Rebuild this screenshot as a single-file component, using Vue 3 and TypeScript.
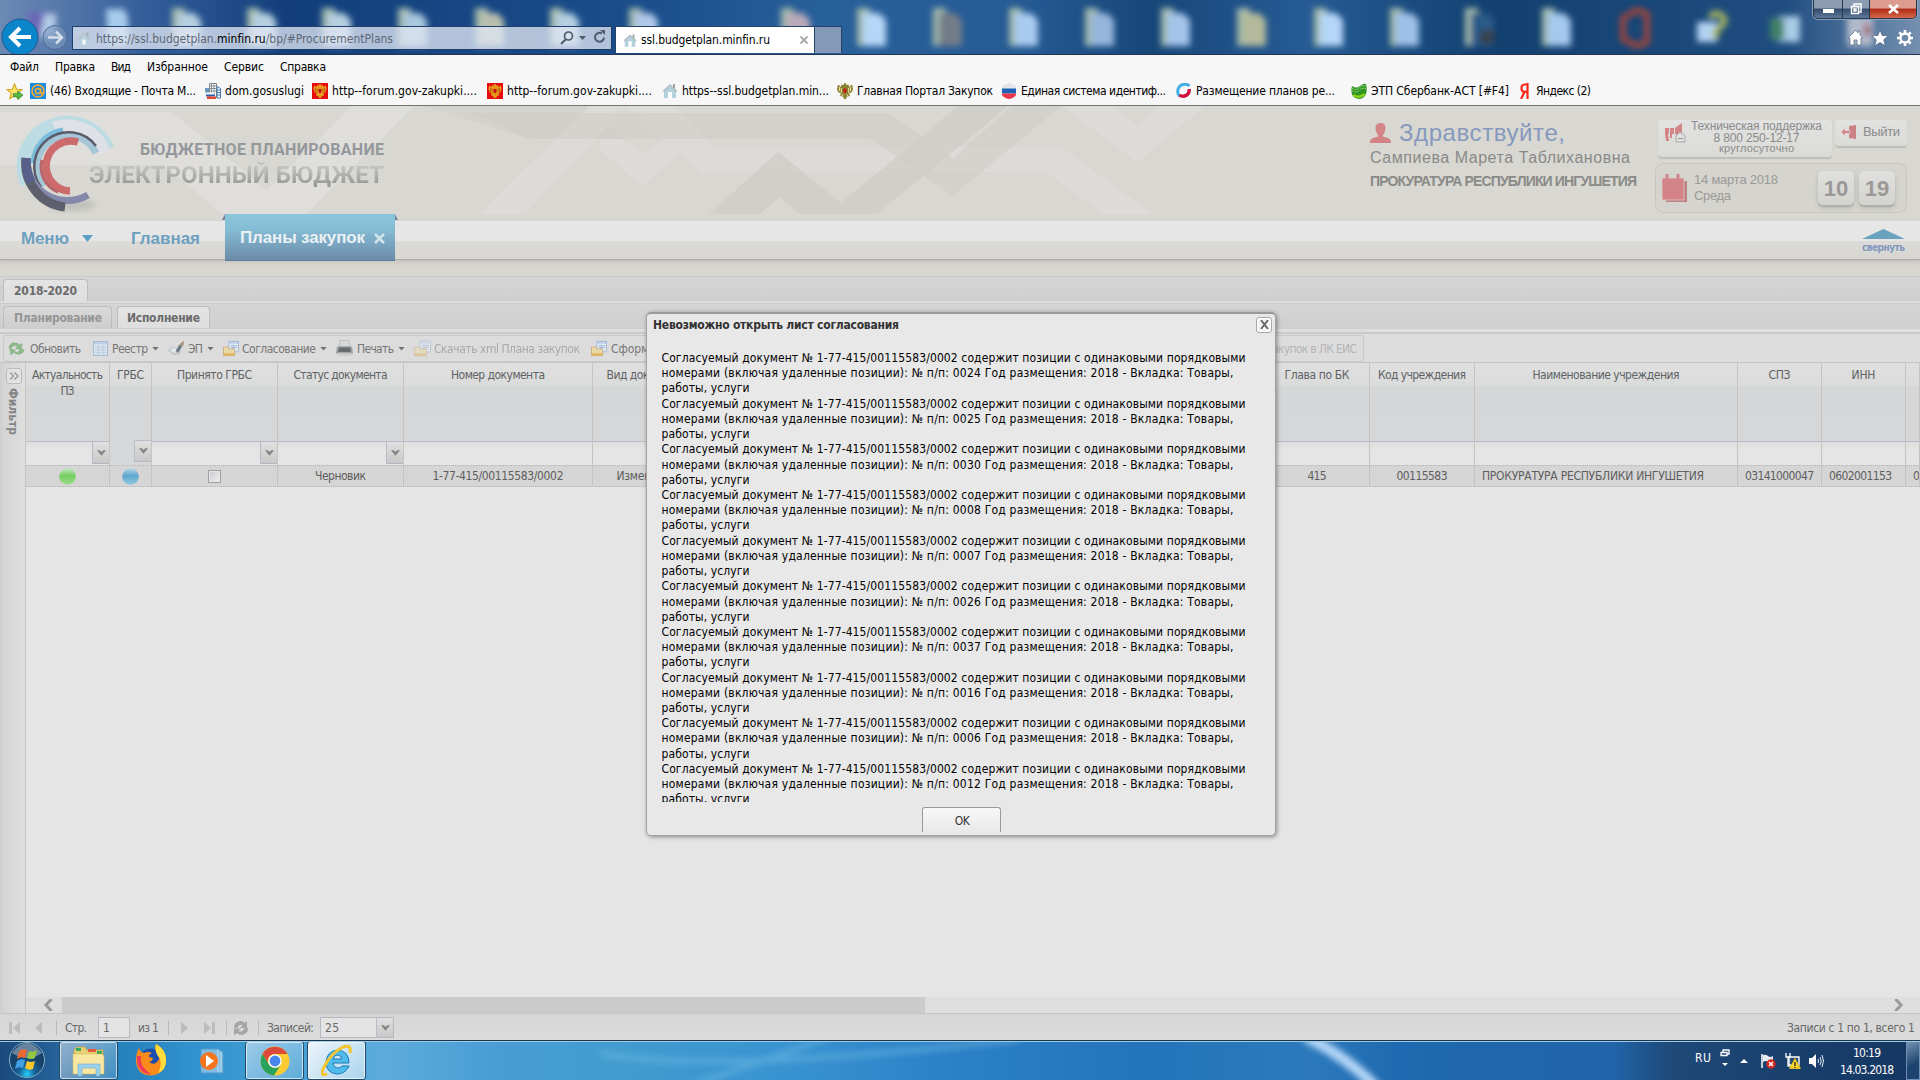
<script setup lang="ts">
// Stretches or tightens a label to the width it occupies in the layout.
const fit = (el: HTMLElement, width: number) => {
  el.style.letterSpacing = '0px'
  el.style.width = 'auto'
  const range = document.createRange()
  range.selectNodeContents(el)
  const natural = range.getBoundingClientRect().width
  const count = (el.textContent ?? '').length
  el.style.letterSpacing = `${(width - natural) / Math.max(1, count - 1)}px`
  el.style.width = `${width}px`
}
const vFit = {
  mounted(el: HTMLElement, binding: { value: number }) {
    fit(el, binding.value)
    document.fonts.ready.then(() => fit(el, binding.value))
  },
}

interface Item { icon?: string; text: string; w: number; gap: number; tg?: number; iw?: number; caret?: boolean; off?: boolean }

const menu: Item[] = [
  { text: 'Файл', w: 29, gap: 10 },
  { text: 'Правка', w: 40, gap: 16 },
  { text: 'Вид', w: 20, gap: 16 },
  { text: 'Избранное', w: 61, gap: 16 },
  { text: 'Сервис', w: 40, gap: 16 },
  { text: 'Справка', w: 46, gap: 16 },
]

const favourites: Item[] = [
  { icon: 'mail', text: '(46) Входящие - Почта М...', w: 146, gap: 7 },
  { icon: 'dom', text: 'dom.gosuslugi', w: 79, gap: 9 },
  { icon: 'eagle-red', text: 'http--forum.gov-zakupki....', w: 145, gap: 8 },
  { icon: 'eagle-red', text: 'http--forum.gov-zakupki....', w: 145, gap: 10 },
  { icon: 'house', text: 'https--ssl.budgetplan.min...', w: 147, gap: 10 },
  { icon: 'eagle', text: 'Главная Портал Закупок', w: 136, gap: 8 },
  { icon: 'flag', text: 'Единая система идентиф...', w: 145, gap: 8 },
  { icon: 'ring', text: 'Размещение планов ре...', w: 139, gap: 10 },
  { icon: 'sber', text: 'ЭТП Сбербанк-АСТ [#F4]', w: 138, gap: 16 },
  { icon: 'ya', text: 'Яндекс (2)', w: 55, gap: 11 },
]

const tools: Item[] = [
  { icon: 'sync', text: 'Обновить', w: 51, gap: 4, tg: 5, iw: 17 },
  { icon: 'table', text: 'Реестр', w: 36, gap: 12, tg: 4, iw: 15, caret: true },
  { icon: 'sign', text: 'ЭП', w: 15, gap: 9, tg: 3, iw: 17, caret: true },
  { icon: 'folder', text: 'Согласование', w: 74, gap: 9, tg: 3, iw: 16, caret: true },
  { icon: 'printer', text: 'Печать', w: 37, gap: 9, tg: 4, iw: 17, caret: true },
  { icon: 'folder', text: 'Скачать xml Плана закупок', w: 146, gap: 9, tg: 3, iw: 17, off: true },
  { icon: 'folder', text: 'Сформировать', w: 84, gap: 11, tg: 4, iw: 16 },
]

interface Column { title: string[]; tw: number[]; filter?: boolean; small?: boolean; value?: string; vw?: number; kind?: string; left?: number }
const columns: Column[] = [
  { title: ['Актуальность', 'ПЗ'], tw: [71, 14], filter: true, kind: 'green' },
  { title: ['ГРБС'], tw: [27], small: true, kind: 'blue' },
  { title: ['Принято ГРБС'], tw: [75], filter: true, kind: 'check' },
  { title: ['Статус документа'], tw: [94], filter: true, value: 'Черновик', vw: 51 },
  { title: ['Номер документа'], tw: [94], value: '1-77-415/00115583/0002', vw: 131 },
  { title: ['Вид документа'], tw: [81], value: 'Изменения', vw: 61 },
  { title: [], tw: [] },
  { title: ['Глава по БК'], tw: [65], value: '415', vw: 19 },
  { title: ['Код учреждения'], tw: [88], value: '00115583', vw: 51 },
  { title: ['Наименование учреждения'], tw: [147], value: 'ПРОКУРАТУРА РЕСПУБЛИКИ ИНГУШЕТИЯ', vw: 222, left: 7 },
  { title: ['СПЗ'], tw: [22], value: '03141000047', vw: 69, left: 7 },
  { title: ['ИНН'], tw: [24], value: '0602001153', vw: 63, left: 7 },
  { title: [], tw: [], value: '060', vw: 21, left: 7 },
]

const numbers = ['0024', '0025', '0030', '0008', '0007', '0026', '0037', '0016', '0006', '0012']

const folders = [
  { x: 187, r: '#b5cfe0' }, { x: 262, r: '#b5cfe0' }, { x: 337, r: '#b5cfe0' }, { x: 413, r: '#a8c6dc' },
  { x: 490, r: '#b9bfae' }, { x: 565, r: '#b5cfe0' }, { x: 644, r: '#b0c8e8' }, { x: 796, r: '#b9a9b8' },
  { x: 872, r: '#b5d6f6' }, { x: 948, r: '#737d88' }, { x: 1024, r: '#a9cbf0' }, { x: 1100, r: '#96b6dc' },
  { x: 1176, r: '#a4c4ea' }, { x: 1252, r: '#b3b99a' }, { x: 1329, r: '#b5d6f8' }, { x: 1405, r: '#9ec0e8' },
  { x: 1480, r: '#2c5a88' }, { x: 1557, r: '#a4c8ee' },
]
</script>

<template>
  <div class="screen">
    <svg class="defs" width="0" height="0">
      <defs>
        <filter id="soft" x="-20%" y="-20%" width="140%" height="140%"><feGaussianBlur stdDeviation="3" /></filter>
        <linearGradient id="orbG" x1="0" y1="0" x2="0" y2="1"><stop offset="0" stop-color="#c4e8c2" /><stop offset=".45" stop-color="#74ce62" /><stop offset="1" stop-color="#a0dc8c" /></linearGradient>
        <linearGradient id="orbB" x1="0" y1="0" x2="0" y2="1"><stop offset="0" stop-color="#b9d8e8" /><stop offset=".45" stop-color="#5fa5cd" /><stop offset="1" stop-color="#90cbe0" /></linearGradient>
      </defs>
      <symbol id="house" viewBox="0 0 16 16"><path d="M11 1h2v5h-2z" fill="#9a9f9f" /><path d="M2 7l6-5 6 5v8H2z" fill="#b3d0dd" /><path d="M8 1L.5 8 2 9l6-6 6 6 1.500-1z" fill="#b4bfc3" /><path d="M6 9h4v6H6z" fill="#fff" /></symbol>
      <symbol id="mail" viewBox="0 0 16 16"><rect width="16" height="16" fill="#168de2" /><circle cx="8" cy="8" r="6" fill="none" stroke="#ffa930" stroke-width="1.600" /><circle cx="8" cy="8" r="2.600" fill="none" stroke="#ffa930" stroke-width="1.500" /><path d="M10.600 5.500v4q1.500 2 3-.5" fill="none" stroke="#ffa930" stroke-width="1.400" /></symbol>
      <symbol id="dom" viewBox="0 0 16 16"><path d="M4.500 .5h7v14h-7z" fill="#fff" stroke="#7d868c" /><path d="M5 3h6M5 5.500h6M5 8h6M6.500 1v12M9 1v12" stroke="#7d868c" stroke-width=".9" /><path d="M12 3.500l3.500 2V15H12z" fill="#fff" stroke="#3c78b0" /><path d="M12 7h3M12 9.500h3M12 12h3" stroke="#3c78b0" /><path d="M0 5h4v5H0z" fill="#6f98c0" /><path d="M0 9.500h9V12H0z" fill="#f4f7fa" /><path d="M1 11.500h9v2H1z" fill="#275caf" /><path d="M2 13.500h9V16H2z" fill="#e5462f" /></symbol>
      <symbol id="eagle-red" viewBox="0 0 16 16"><rect width="16" height="16" fill="#e60c0c" /><path d="M7.300 1h1.400l.3 1.500L11 2l.5 2L14 2.500 14.500 6l-1 3-2 1.500.5 2-2 .5-1 2H7l-1-2-2-.5.5-2-2-1.500-1-3L2 2.500 4.500 4 5 2l2 .5z" fill="#e69a1d" /><path d="M6.500 6h3v3L8 10.500 6.500 9z" fill="#c31111" /><path d="M3.500 5v4M5 5.500v4M12.500 5v4M11 5.500v4" stroke="#b84a08" stroke-width=".7" /></symbol>
      <symbol id="eagle" viewBox="0 0 16 16"><path d="M7.300 0h1.400l.5 2L11.500 1.500l.5 2.500L15 1.500l1 4.500-1 3-3 1.500 1 2.500-3 .5-1 2.500H7L6 13.500 3 13l1-2.500L1 9 0 6l1-4.500L4 4l.5-2.500L6.800 2z" fill="#8b8230" /><path d="M2.500 4v4M4.300 5v5M13.500 4v4M11.700 5v5M5 13l1.500-2M11 13l-1.500-2" stroke="#f4efb2" stroke-width=".9" /><path d="M6.300 5.500h3.400v3.500L8 10.500 6.300 9z" fill="#c7201a" /></symbol>
      <symbol id="flag" viewBox="0 0 16 16"><path d="M1 3l7-3 7 3v3H1z" fill="#e4e4ea" /><path d="M1 5.500h14v5H1z" fill="#1c63b7" /><path d="M1 10.500h14V12q-2 3-7 4-5-1-7-4z" fill="#e8364a" /></symbol>
      <symbol id="ring" viewBox="0 0 16 16"><path d="M13.500 3A6.500 6.500 0 1 0 4 13.500" fill="none" stroke="#42aee6" stroke-width="3" /><path d="M3.500 12a6 6 0 0 0 9.500-6" fill="none" stroke="#d0103c" stroke-width="3.400" /></symbol>
      <symbol id="sber" viewBox="0 0 16 16"><path d="M1 3q4 3 8 0t6-2q1 3 .5 8-1.500 7-7.500 7-7-1-7.500-7Q0 6 1 3z" fill="#2e961f" /><path d="M1 5q4 3 7 0t7-2M1 7.500q4 3 7 0t7-2" fill="none" stroke="#a7dc9a" stroke-width="1" stroke-dasharray="1.500 .8" /><path d="M2.500 12q6 4 11-1" stroke="#8bd31c" stroke-width="2.500" fill="none" /></symbol>
      <symbol id="ya" viewBox="0 0 9 16"><path d="M7.500 0v16M7.500 1.500H4.500q-3 .2-3 3.700t3 3.700h3M4.500 9L1 16" fill="none" stroke="#fb2b1c" stroke-width="2.200" /></symbol>
      <symbol id="sync" viewBox="0 0 18 16"><path d="M1 7q1-5 6-5 3 0 5 2l3-1-1 6-6-1 2-2q-4-3-7 2zM17 9q-1 5-6 5-3 0-5-2l-3 3-1-7 6 2-2 1q4 3 7-2z" fill="#8dbb8b" stroke="#79a578" stroke-width=".5" /></symbol>
      <symbol id="table" viewBox="0 0 16 16"><rect x=".5" y=".5" width="15" height="15" fill="#dce6ef" stroke="#a1b9d5" /><path d="M1 1h14v2.500H1z" fill="#bdcfe4" /><path d="M5.500 4v11M10.500 4v11M2 6.500h12M2 9.500h12M2 12.500h12" stroke="#adc3da" stroke-width=".8" /></symbol>
      <symbol id="sign" viewBox="0 0 18 16"><path d="M0 10l5-4 9 4-2 4-6 1z" fill="#bbc4c8" /><path d="M2 10l4-3 5 3-4 3z" fill="#e5e9ea" /><path d="M8 11L12 4l3 2-4 6z" fill="#6b7b83" /><path d="M12 4l3-3 2-1-1 6z" fill="#a38f75" /></symbol>
      <symbol id="folder" viewBox="0 0 17 16"><path d="M6 .5h10.500v11H6z" fill="#e3ebf3" stroke="#9cb6d6" /><path d="M7 1h9v2H7z" fill="#bed0e6" /><path d="M8 5h7M8 7h7M11 4v5" stroke="#9cb6d6" /><path d="M.5 6.500h5l1 2h6v7H.5z" fill="#e9d9a8" stroke="#c9ae87" /><path d="M1 13h11v2.500H1z" fill="#dfb65a" /></symbol>
      <symbol id="printer" viewBox="0 0 17 16"><path d="M4 0h9l1 6H3z" fill="#d4dad6" stroke="#a9adab" stroke-width=".6" /><path d="M1 6h15l1 7H0z" fill="#999d9f" /><path d="M3 7h11l1 5H2z" fill="#686c6f" /><path d="M2 12h13v3H2z" fill="#c7cac9" /></symbol>
      <symbol id="chev" viewBox="0 0 10 6"><path d="M0 0h3l2 2 2-2h3L5 6z" fill="#838383" /></symbol>
    </svg>

    <!-- window frame -->
    <header class="aero">
      <svg class="wall" viewBox="0 0 1920 54" width="1920" height="54">
        <defs><linearGradient id="sky"><stop offset="0" stop-color="#6d8ab5" /><stop offset=".08" stop-color="#305c98" /><stop offset=".15" stop-color="#123f7c" /><stop offset=".33" stop-color="#1a4d8a" /><stop offset=".43" stop-color="#28609a" /><stop offset=".53" stop-color="#265b94" /><stop offset=".6" stop-color="#174779" /><stop offset=".68" stop-color="#265b94" /><stop offset=".78" stop-color="#12406f" /><stop offset=".93" stop-color="#1f4d80" /><stop offset="1" stop-color="#7590b0" /></linearGradient></defs>
        <rect width="1920" height="54" fill="url(#sky)" />
        <g filter="url(#soft)">
          <path d="M28 12h28v24H28z" fill="#6c68b8" /><path d="M44 14h12v24H40z" fill="#b2cbe5" />
          <path d="M106 9h18l4 8v28h-20z" fill="#a8ccec" />
          <g v-for="f in folders" :key="f.x">
            <path :d="`M${f.x - 15} 8h13v38h-13z`" fill="#a3b9aa" />
            <path :d="`M${f.x - 9} 13h16l7 7v26h-23z`" :fill="f.r" />
          </g>
          <path d="M1480 30h14v14h-14z" fill="#37424e" />
          <path d="M1623 18l14-8 10 4v28l-10 4-14-7z" fill="none" stroke="#a0443a" stroke-width="6" />
          <path d="M1697 22h20v20h-20z" fill="#b4d3f2" /><path d="M1710 18q5-8 12-2t-6 14v9" fill="none" stroke="#aab85d" stroke-width="6" />
          <path d="M1778 16h22v26h-22z" fill="#a9cbe6" /><path d="M1770 18h14v22h-14z" fill="#408167" />
          <path d="M1847 14h26v32h-26z" fill="#b1bacb" /><path d="M1864 22l8 8-8 8z" fill="#a45464" />
        </g>
      </svg>
      <div class="winbtns"><i class="wmin"><b></b></i><i class="wmax"><svg viewBox="0 0 12 12" width="12" height="12"><path d="M4 3V1h7v8H9M1.500 3.500h7v7h-7zM4 6h2v2H4z" fill="none" stroke="#fff" stroke-width="1.500" /></svg></i><i class="wx"><svg viewBox="0 0 11 10" width="11" height="10"><path d="M1 1l9 8M10 1L1 9" stroke="#fff" stroke-width="2.600" /></svg></i></div>
      <div class="navrow">
        <svg class="back" viewBox="0 0 70 34" width="70" height="34"><circle cx="20" cy="17" r="18" fill="#0c86ca" stroke="#24568f" /><path d="M31 17H12M20 8l-9 9 9 9" fill="none" stroke="#fff" stroke-width="4" /><circle cx="55" cy="17.500" r="12" fill="#7d99bf" fill-opacity=".6" stroke="#516d93" /><path d="M48 17.500h13M56 11.500l6 6-6 6" fill="none" stroke="#d5deea" stroke-width="2.500" /></svg>
        <div class="address">
          <svg width="14" height="15"><use href="#house" /></svg>
          <span class="url" v-fit="297">https://ssl.budgetplan.<b>minfin.ru</b>/bp/#ProcurementPlans</span>
          <svg class="tools" viewBox="0 0 48 16" width="48" height="16"><circle cx="8.500" cy="6" r="4" fill="none" stroke="#4f5b69" stroke-width="1.700" /><path d="M6 9l-5 5" stroke="#4f5b69" stroke-width="2" /><path d="M19 6h7l-3.500 4z" fill="#4f5b69" /><path d="M42 3.500a4.500 4.500 0 1 0 2 4" fill="none" stroke="#4f5b69" stroke-width="2" /><path d="M40 0h5v5z" fill="#4f5b69" /></svg>
        </div>
        <div class="btab"><svg width="14" height="15"><use href="#house" /></svg><span v-fit="129">ssl.budgetplan.minfin.ru</span><svg class="bx" viewBox="0 0 8 8" width="8" height="8"><path d="M.5.5l7 7M7.500.5l-7 7" stroke="#a3a3a3" stroke-width="1.800" /></svg></div>
        <div class="newtab"></div>
        <svg class="sys" viewBox="0 0 66 18" width="66" height="18"><g fill="#fff" stroke="#506683" stroke-width=".7"><path d="M9 1L1 9h2v7h4v-5h3v5h4V9h2l-3-3V2h-2v2z" /><path d="M33 1l2.200 5.500 6 .3-4.500 4 1.500 6-5.200-3.300-5.200 3.300 1.500-6-4.500-4 6-.3z" /></g><circle cx="58" cy="9" r="4.500" fill="none" stroke="#fff" stroke-width="2.400" /><path d="M58 1v3M58 14v3M50 9h3M63 9h3M52.300 3.300l2 2M61.700 12.700l2 2M52.300 14.700l2-2M61.700 5.300l2-2" stroke="#fff" stroke-width="2.600" /></svg>
      </div>
    </header>

    <nav class="menubar"><span v-for="m in menu" :key="m.text" v-fit="m.w" :style="{ marginLeft: m.gap + 'px' }">{{ m.text }}</span></nav>
    <nav class="favs">
      <svg class="star" viewBox="0 0 16 16" width="17" height="17"><path d="M8 .8l2 5 5 .4-4 3.400 1.500 5L8 12l-4.500 2.700L5 9.600 1 6.200l5-.4z" fill="#fde56c" stroke="#d39f16" /><path d="M7 10h4V7.500l5 4-5 4V13H7z" fill="#56b949" stroke="#2b8a2c" stroke-width=".7" /></svg>
      <div v-for="(f, i) in favourites" :key="i" class="fav" :style="{ marginLeft: f.gap + 'px' }">
        <svg :width="f.icon === 'ya' ? 9 : 16" height="16"><use :href="'#' + f.icon" /></svg><span v-fit="f.w" :class="{ wide: f.icon === 'ya' }">{{ f.text }}</span>
      </div>
    </nav>

    <!-- site banner -->
    <section class="banner">
      <svg class="pattern" viewBox="0 106 1920 108" width="1920" height="108">
        <path d="M0 112h172l95 78 84-84h64L306 214h-84l-58-49H0z" fill="#dfdedb" />
        <path d="M424 106l106 33h94l-40-33z" fill="#d3d2cd" /><path d="M478 214L590 106h36L525 214z" fill="#dcdbd7" />
        <path d="M600 150l42 37 52-48h-30l-22 14-20-14h-22z" fill="#dcdbd7" />
        <path d="M625 106h51l38 41h347l92 67h-50l-57-42H701z" fill="#dcdbd7" />
        <path d="M470 113h418l65 46 59-53h49l-108 90-82-57H530z" fill="#cfcdc8" fill-opacity=".6" />
        <path d="M709 214l69-62 63 51 117-97h50L877 214h-77l-21-17-19 17z" fill="#cecdc7" fill-opacity=".8" />
        <path d="M1061 106l76 56 69-56h-48l-21 19-24-19z" fill="#dcdbd7" />
      </svg>
      <svg class="logo" viewBox="15 112 105 102" width="105" height="102">
        <g fill="none">
          <ellipse cx="72" cy="205" rx="24" ry="6" fill="#8a8a88" opacity=".3" filter="url(#soft)" />
          <path d="M27 184A43.500 43.500 0 0 1 108 149" stroke="#bcdbe2" stroke-width="13" />
          <path d="M54 127A40 40 0 0 1 105 152" stroke="#dfe1e8" stroke-width="11" />
          <path d="M33 163A35 35 0 0 1 63 130" stroke="#78bddc" stroke-width="5" />
          <path d="M44 186A31 31 0 1 1 96 153" stroke="#a5c6d6" stroke-width="7" />
          <path d="M41 187A34 34 0 0 1 96 146" stroke="#5b5c69" stroke-width="2.500" />
          <path d="M70 191A25 25 0 1 1 78 142" stroke="#cd6a6c" stroke-width="7.500" />
          <path d="M42 160A27 27 0 0 0 58 192" stroke="#b8666a" stroke-width="3" />
          <path d="M27 158A40.500 40.500 0 0 0 88 195" stroke="#8489ab" stroke-width="7" />
          <path d="M26 158A44 44 0 0 0 65 207" stroke="#5d5f6d" stroke-width="9" />
          <path d="M26 158Q26 172 31 182" stroke="#595f8b" stroke-width="9" />
        </g>
      </svg>
      <div class="titles"><span class="t1" v-fit="244">БЮДЖЕТНОЕ ПЛАНИРОВАНИЕ</span><span class="t2" v-fit="295">ЭЛЕКТРОННЫЙ БЮДЖЕТ</span></div>
      <div class="user">
        <div class="hello"><svg viewBox="0 0 21 20" width="21" height="20"><path d="M5.500 5q0-5 5-5t5 5q0 4.500-2.500 7v1.500l5 1.500q3 1 3 4.500V20H0v-.5Q0 16 3 15l5-1.500V12Q5.500 9.500 5.500 5z" fill="#d48487" /></svg><span v-fit="166">Здравствуйте,</span></div>
        <span class="name" v-fit="260">Сампиева Марета Таблихановна</span>
        <span class="org" v-fit="267">ПРОКУРАТУРА РЕСПУБЛИКИ ИНГУШЕТИЯ</span>
      </div>
      <div class="side">
        <div class="top">
          <div class="support"><svg viewBox="0 0 22 20" width="22" height="20"><path d="M0 5h4v6H3l1 7H1L0 11zM5 5h4v6H7v4H5zM10 5l7-5v14l-7-3z" fill="#d48487" /><path d="M11 13l4-4 5 4v6h-9z" fill="#dedede" stroke="#aaa" /><path d="M13 15.500h5" stroke="#999" /></svg><div class="suptext"><span v-fit="131">Техническая поддержка</span><span v-fit="86">8 800 250-12-17</span><span class="s3" v-fit="75">круглосуточно</span></div></div>
          <div class="exit"><svg viewBox="0 0 15 14" width="15" height="14"><path d="M8 1l7-1v14l-7-1z" fill="#cc8184" /><path d="M0 7l4-4v2.500h5v3H4V11z" fill="#d48487" stroke="#e5e0df" stroke-width=".6" /></svg><span v-fit="37">Выйти</span></div>
        </div>
        <div class="date">
          <svg viewBox="0 0 26 29" width="26" height="29"><path d="M4 7h21v21H4z" fill="#bb8183" /><path d="M0 4h22v22H0z" fill="#d48487" stroke="#e0cfce" stroke-width=".7" /><path d="M5 0v6M16 0v6" stroke="#cf8689" stroke-width="3" /></svg>
          <div class="day"><span v-fit="84">14 марта 2018</span><span v-fit="37">Среда</span></div>
          <b>10</b><b>19</b>
        </div>
      </div>
    </section>

    <nav class="sitenav">
      <span class="link" v-fit="48">Меню</span><i class="down"></i><span class="link main" v-fit="69">Главная</span>
      <div class="active"><span v-fit="125">Планы закупок</span><svg viewBox="0 0 11 11" width="11" height="11"><path d="M1 1l9 9M10 1l-9 9" stroke="#d3e4eb" stroke-width="2.500" /></svg></div>
      <div class="fold"><i></i><span v-fit="43">свернуть</span></div>
    </nav>

    <main>
      <div class="tabs years"><div class="tab on"><span v-fit="63">2018-2020</span></div></div>
      <div class="tabs modes"><div class="tab plan"><span v-fit="88">Планирование</span></div><div class="tab on exec"><span v-fit="73">Исполнение</span></div></div>
      <div class="toolbar">
        <div class="group">
          <div v-for="(t, i) in tools" :key="i" class="tool" :class="{ off: t.off }" :style="{ marginLeft: t.gap + 'px' }">
            <svg :width="t.iw" height="17"><use :href="'#' + t.icon" /></svg><span v-fit="t.w" :style="{ marginLeft: t.tg + 'px' }">{{ t.text }}</span><i v-if="t.caret"></i>
          </div>
          <span class="lk" v-fit="90">закупок в ЛК ЕИС</span>
        </div>
      </div>
      <div class="body">
        <aside><div class="expand"><svg viewBox="0 0 10 8" width="10" height="8"><path d="M1 .5L4.500 4 1 7.500M5.500.5L9 4 5.500 7.500" fill="none" stroke="#9d9d9d" stroke-width="1.500" /></svg></div><span>Фильтр</span></aside>
        <div class="grid">
          <div class="row head"><div v-for="(c, i) in columns" :key="i" class="cell" :class="{ short: c.small }"><span v-for="(t, j) in c.title" :key="t" v-fit="c.tw[j]">{{ t }}</span><i v-if="c.small" class="drop"><svg width="9" height="6"><use href="#chev" /></svg></i></div></div>
          <div class="row filters"><div v-for="(c, i) in columns" :key="i" class="cell" :class="{ short: c.small }"><i v-if="c.filter" class="drop"><svg width="9" height="6"><use href="#chev" /></svg></i></div></div>
          <div class="row data">
            <div v-for="(c, i) in columns" :key="i" class="cell" :class="{ start: c.left }">
              <svg v-if="c.kind === 'green' || c.kind === 'blue'" viewBox="0 0 17 17" width="17" height="17"><circle cx="8.500" cy="8.500" r="8.300" :fill="c.kind === 'green' ? 'url(#orbG)' : 'url(#orbB)'" /></svg>
              <i v-if="c.kind === 'check'" class="check"></i>
              <span v-if="c.value" v-fit="c.vw ?? 0">{{ c.value }}</span>
            </div>
          </div>
          <div class="blank"></div>
          <div class="hscroll"><svg viewBox="0 0 10 12" width="10" height="12"><path d="M8.500 0L3 6l5.500 6" fill="none" stroke="#999" stroke-width="3" /></svg><div class="thumb"></div><svg class="rt" viewBox="0 0 10 12" width="10" height="12"><path d="M1.500 0L7 6l-5.500 6" fill="none" stroke="#999" stroke-width="3" /></svg></div>
        </div>
      </div>
      <footer class="pager">
        <svg viewBox="0 0 36 14" width="36" height="14"><path d="M0 1h3v12H0zM11 1v12L4 7zM33 1v12l-7-6z" fill="#bcbcbc" /></svg><i class="sep"></i>
        <span class="pg" v-fit="22">Стр.</span><div class="inp"><span v-fit="6">1</span></div><span class="of" v-fit="21">из 1</span><i class="sep s2"></i>
        <svg viewBox="0 0 36 14" width="36" height="14"><path d="M1 1v12l7-6zM24 1v12l7-6zM32 1h3v12h-3z" fill="#bcbcbc" /></svg><i class="sep s3"></i>
        <svg viewBox="0 0 16 16" width="16" height="16"><path d="M1 8a6.500 6.500 0 0 1 11-5l2-2v7H7l2.500-2.500Q6 3 4.500 8zM15 8a6.500 6.500 0 0 1-11 5l-3 2.500V8.500h7L5.500 11q4 2 6-3z" fill="#a5a5a5" /></svg><i class="sep s4"></i>
        <span class="rec" v-fit="47">Записей:</span><div class="combo"><span v-fit="14">25</span><i class="drop"><svg width="9" height="6"><use href="#chev" /></svg></i></div>
        <span class="total" v-fit="128">Записи с 1 по 1, всего 1</span>
      </footer>
    </main>

    <footer class="taskbar">
      <svg class="wall" viewBox="0 0 1920 40" width="1920" height="40">
        <defs><linearGradient id="tb"><stop offset="0" stop-color="#1b4a7c" /><stop offset=".03" stop-color="#266399" /><stop offset=".06" stop-color="#257fba" /><stop offset=".1" stop-color="#2f92ce" /><stop offset=".2" stop-color="#5cabdc" /><stop offset=".26" stop-color="#489dd4" /><stop offset=".32" stop-color="#429ccf" /><stop offset=".4" stop-color="#3a94d1" /><stop offset=".5" stop-color="#2b80c6" /><stop offset=".6" stop-color="#2374b9" /><stop offset=".68" stop-color="#2c7abd" /><stop offset=".73" stop-color="#1e69af" /><stop offset=".84" stop-color="#2164aa" /><stop offset=".87" stop-color="#1e4978" /><stop offset="1" stop-color="#153661" /></linearGradient></defs>
        <rect width="1920" height="40" fill="url(#tb)" />
        <g filter="url(#soft)"><path d="M1306-4q38 18 70 50" fill="none" stroke="#b4d5f7" stroke-width="11" /><path d="M600 12q110 22 420-14M690 45L830-4" fill="none" stroke="#76bfe6" stroke-width="6" opacity=".45" /></g>
      </svg>
      <svg class="orb" viewBox="0 0 38 38" width="38" height="38"><defs><radialGradient id="ob" cx=".5" cy=".9"><stop offset="0" stop-color="#27d1ff" /><stop offset=".45" stop-color="#166398" /><stop offset="1" stop-color="#164169" /></radialGradient></defs><circle cx="19" cy="19" r="17.500" fill="url(#ob)" stroke="#7facc9" /><path d="M4 12Q19-8 34 12 19 22 4 12z" fill="#fff" opacity=".35" /><path d="M11 10q4-3 8-1l-2 8q-4-2-8 1z" fill="#eb6a33" /><path d="M21 10q4 2 8-1l-2 8q-4 2-8 0z" fill="#93c840" /><path d="M9 20q4-3 8-1l-2 8q-4-2-8 1z" fill="#3f9ee4" /><path d="M19 20q4 2 8 0l-2 8q-4 2-8-1z" fill="#fcc62d" /></svg>
      <div class="task exp"><svg viewBox="0 0 34 32" width="34" height="32"><path d="M2 5l3-3h8l2 3h16v22H2z" fill="#e8cf72" stroke="#bd9c39" stroke-width=".6" /><path d="M4 3h5v3H4zM25 6h5v4h-5z" fill="#35a85a" /><path d="M16 4h8v3h-8z" fill="#e55a3c" /><path d="M1 9h29l2 2v18H1z" fill="#f8e7a2" stroke="#d3b755" stroke-width=".5" /><path d="M6 31V19h22v12h-4v-8H10v8z" fill="#9cd1eb" stroke="#6fabc9" stroke-width=".6" /></svg></div>
      <svg class="ff" viewBox="0 0 32 32" width="32" height="32"><circle cx="16" cy="17" r="12.500" fill="#1b4fae" /><path d="M4 4q1 4 5 5 4-2 8 0-4 2-3 4l4 1q-1 4-4 4 5 4 9-1 3-5-2-10-2-3 0-7 9 4 10 15 0 15-15 16.500Q2 31 1 17 1 9 4 4z" fill="#fb8b1b" /><path d="M2 12q-1 17 14 18.500Q4 22 6 12z" fill="#ef3c5b" /><path d="M21 0q11 6 10 17 0 9-8 12 4-7 2-14-6-7-4-15z" fill="#fedc3c" /></svg>
      <svg class="wmp" viewBox="0 0 28 26" width="28" height="26"><path d="M3 1h17l5 3v21H3z" fill="#80bce2" stroke="#519bca" /><path d="M20 2v22M23 4v20" stroke="#c0def0" /><circle cx="11" cy="13" r="9" fill="#f4751f" /><path d="M8 7l8 6-8 6z" fill="#fff" /></svg>
      <div class="task chr"><svg viewBox="0 0 30 30" width="30" height="30"><circle cx="15" cy="15" r="14.500" fill="#fbcc31" /><path d="M2.400 8A14.500 14.500 0 0 1 27.600 8H15a7 7 0 0 0-7 9z" fill="#dc4a3c" /><path d="M2.400 8A14.500 14.500 0 0 0 14 29.500l7-11a7 7 0 0 1-12 0z" fill="#28a35b" /><circle cx="15" cy="15" r="6.800" fill="#fff" /><circle cx="15" cy="15" r="5.400" fill="#4686ee" /></svg></div>
      <div class="task ie"><svg viewBox="0 0 32 32" width="32" height="32"><path d="M27 23Q23 29 16 29 5 28 5 17 6 6 16.500 5 28 6 28 18H12q1 5 5 5 3 0 4-2h7z M12 14h9q-1-4-4.500-4T12 14z" fill="#4fbcec" stroke="#1a79b5" stroke-width="1" /><path d="M6 29Q-2 32 3 22 10 8 22 2q9-3 7 6" fill="none" stroke="#f4c52e" stroke-width="3" /></svg></div>
      <div class="tray">
        <span class="ru" v-fit="16">RU</span>
        <svg class="lang" viewBox="0 0 10 18" width="10" height="18"><path d="M3 3V1h6v4H7M1 3.500h6v3H1z" fill="none" stroke="#fff" stroke-width="1.300" /><path d="M2 14h6l-3 3z" fill="#fff" /></svg>
        <svg class="up" viewBox="0 0 8 4" width="8" height="4"><path d="M0 4l4-4 4 4z" fill="#fff" /></svg>
        <svg class="flagt" viewBox="0 0 16 16" width="16" height="16"><path d="M2 1v14" stroke="#fff" stroke-width="1.500" /><path d="M3 2q3-1 5 1t5 0v7q-3 1-5-1t-5 0z" fill="#e6ecf2" /><circle cx="11" cy="11" r="4.700" fill="#d3281f" /><path d="M9 9l4 4M13 9l-4 4" stroke="#fff" stroke-width="1.500" /></svg>
        <svg class="net" viewBox="0 0 17 16" width="17" height="16"><path d="M5 4h10v8H5z" fill="#234c7c" stroke="#fff" stroke-width="1.400" /><path d="M2 0v4h4V0M4 4v9h6" fill="none" stroke="#fff" stroke-width="1.300" /><path d="M11 5l6 11H5z" fill="#f8d629" stroke="#a48b11" stroke-width=".5" /><path d="M11 9v4M11 14v1" stroke="#222" stroke-width="1.300" /></svg>
        <svg class="snd" viewBox="0 0 16 14" width="16" height="14"><path d="M1 4h3l4-4v14l-4-4H1z" fill="#fff" /><path d="M10 5q1 2 0 4M12 3q2.500 4 0 8M14 1q3 6 0 12" fill="none" stroke="#e4ecf5" stroke-width="1" /></svg>
        <div class="clock"><span v-fit="28">10:19</span><span v-fit="54">14.03.2018</span></div>
        <i class="peek"></i>
      </div>
    </footer>

    <!-- message window -->
    <div class="modal">
      <div class="mhead"><b v-fit="246">Невозможно открыть лист согласования</b><i><svg viewBox="0 0 9 9" width="9" height="9"><path d="M1 0l7 9M8 0L1 9" stroke="#666" stroke-width="1.900" /></svg></i></div>
      <div class="mtext">
        <template v-for="n in numbers" :key="n">
          <div><span v-fit="584">Согласуемый документ № 1-77-415/00115583/0002 содержит позиции с одинаковыми порядковыми</span></div>
          <div><span v-fit="572">номерами (включая удаленные позиции): № п/п: {{ n }} Год размещения: 2018 - Вкладка: Товары,</span></div>
          <div><span v-fit="88">работы, услуги</span></div>
        </template>
      </div>
      <button><span v-fit="15">OK</span></button>
    </div>
  </div>
</template>

<style>
body { margin: 0; overflow: hidden; }
</style>

<style scoped>
* { box-sizing: border-box; }
span { display: inline-block; white-space: nowrap; flex: none; }
svg { flex: none; display: block; }
i, b { flex: none; }
.screen { position: relative; display: flex; flex-direction: column; width: 1920px; height: 1080px; overflow: hidden; background: #e5e5e5; font: 12px/16px "DejaVu Sans Condensed", "DejaVu Sans", sans-serif; color: #000; }
.defs { position: absolute; }
.aero { position: relative; height: 55px; border-bottom: 1px solid #24344e; box-shadow: inset 0 -1px #a9bdd8; flex: none; overflow: hidden; }
.wall { position: absolute; left: 0; top: 0; }
.winbtns { position: absolute; right: 3px; top: 0; display: flex; width: 104px; height: 19px; border: 1px solid #26364b; border-top: 0; border-radius: 0 0 5px 5px; overflow: hidden; box-shadow: 0 0 0 1px #8ca2bd; }
.winbtns i { display: flex; align-items: center; justify-content: center; height: 18px; }
.wmin { width: 29px; background: linear-gradient(#8b9cb3 45%, #33496a 50%, #5e7b9c); border-right: 1px solid #26364b; padding-top: 4px; }
.wmin b { width: 11px; height: 4px; background: #fff; }
.wmax { width: 27px; background: linear-gradient(#8b9cb3 45%, #33496a 50%, #5e7b9c); border-right: 1px solid #26364b; }
.wx { width: 47px; background: linear-gradient(#dc9d90 45%, #b02b15 50%, #d4674d); }
.navrow { position: relative; display: flex; padding-top: 20px; height: 53px; }
.back { margin-right: 2px; overflow: visible; }
.address { display: flex; align-items: center; flex: none; width: 540px; height: 24px; margin-top: 6px; padding-left: 4px; background: rgba(222, 230, 242, .78); border: 1px solid #203f6e; }
.address svg:first-child { opacity: .8; margin-right: 5px; }
.url { color: #5e6877; padding-top: 1px; } .url b { font-weight: 400; color: #000; }
.tools { margin-left: 167px; }
.btab { display: flex; align-items: center; flex: none; width: 200px; height: 27px; margin: 6px 0 0 3px; padding-left: 7px; background: #fff; border: 1px solid #23426c; border-bottom: 0; }
.btab span { margin-left: 4px; } .bx { margin-left: 30px; }
.newtab { flex: none; width: 27px; height: 27px; margin-top: 6px; background: #8399b5; border: 1px solid #23426c; border-left: 0; border-bottom: 0; }
.sys { margin: 9px 7px 0 auto; }
.menubar { display: flex; align-items: center; height: 24px; background: #f7f7f7; flex: none; padding-bottom: 1px; }
.favs { display: flex; align-items: center; height: 27px; padding: 0 0 2px 6px; background: #f7f7f7; border-bottom: 1px solid #727272; flex: none; }
.fav { display: flex; align-items: center; gap: 4px; } .wide { margin-left: 3px; }
.banner { position: relative; display: flex; height: 115px; background: #d8d7d1; flex: none; font-family: "Liberation Sans", Arial, sans-serif; overflow: hidden; }
.pattern { position: absolute; left: 0; top: 0; }
.logo { position: relative; margin: 6px 0 0 15px; }
.titles { position: relative; display: flex; flex-direction: column; align-items: flex-end; width: 295px; margin-left: -31px; padding-top: 35px; font-family: Roboto, sans-serif; font-weight: 700; }
.t1 { font-size: 16px; line-height: 18px; color: #94979b; }
.t2 { font-size: 24px; line-height: 26px; margin-top: 3px; color: transparent; background: linear-gradient(#c2c2c1 20%, #9a9a99 85%); background-clip: text; -webkit-background-clip: text; }
.user { position: relative; display: flex; flex-direction: column; width: 288px; margin-left: 986px; padding-top: 12px; color: #8a8a88; }
.hello { display: flex; align-items: center; gap: 8px; height: 29px; font-size: 24px; line-height: 29px; color: #8699bd; }
.name { font-size: 16px; line-height: 20px; margin-top: 1px; } .org { font: 700 14px/18px "Liberation Sans", sans-serif; margin-top: 4px; }
.side { position: relative; width: 253px; padding-top: 14px; color: #8b8b8b; }
.top { display: flex; align-items: flex-start; gap: 3px; height: 43px; }
.support { display: flex; width: 174px; height: 37px; padding: 3px 0 0 7px; background: linear-gradient(#e2e2e1, #dadad6); border-radius: 4px; box-shadow: 0 2px 1px #bdbdb9; }
.suptext { display: flex; flex-direction: column; align-items: center; margin: -3px 0 0 4px; font-size: 12px; line-height: 12px; }
.suptext .s3 { font-size: 11px; line-height: 9px; }
.exit { display: flex; align-items: center; gap: 7px; width: 72px; height: 26px; padding: 0 0 3px 6px; font-size: 13px; background: linear-gradient(#e2e2e1, #dadad6); border-radius: 4px; box-shadow: 0 2px 1px #bdbdb9; }
.date { display: flex; align-items: center; width: 252px; height: 50px; margin-left: -3px; padding-left: 6px; border: 1px solid #c6c5c0; border-radius: 9px; background: #d5d4ce; }
.day { display: flex; flex-direction: column; width: 85px; margin: 0 39px 0 6px; font-size: 13px; line-height: 16px; color: #9b9a97; }
.date b { width: 36px; height: 34px; margin-right: 5px; border-radius: 5px; background: linear-gradient(#e0e0df, #d4d3ce); box-shadow: 0 2px 1px #aeaea9, 0 3px 5px #b9b8b3; font: 700 22px/35px "Liberation Sans", sans-serif; text-align: center; color: #9a9997; }
.sitenav { position: relative; display: flex; height: 38px; flex: none; background: linear-gradient(#e6e6e6 0 20px, #dcdbd8 20px, #d7d6d2); box-shadow: 0 1px 1px #aeada9, 0 3px 5px #c4c3be; font: 700 17px/36px "Liberation Sans", Arial, sans-serif; color: #6ca0bf; z-index: 1; }
.link { margin-left: 21px; } .sitenav .main { margin-left: 38px; }
.down { width: 11px; height: 7px; margin: 14px 0 0 13px; background: #5b9fc1; clip-path: polygon(0 0, 100% 0, 50% 100%); }
.active { position: relative; display: flex; align-items: center; gap: 9px; width: 170px; height: 47px; margin: -7px 0 0 25px; padding: 2px 0 0 15px; color: #eaf1f5; background: linear-gradient(#8bc7dc, #84bbd3 35%, #6d8ba8); border-bottom: 1px solid #5b7e9f; }
.active::before, .active::after { content: ""; position: absolute; top: 0; width: 3px; height: 6px; background: #72829b; }
.active::before { left: -3px; clip-path: polygon(100% 0, 100% 100%, 0 100%); }
.active::after { right: -3px; clip-path: polygon(0 0, 100% 100%, 0 100%); }
.fold { display: flex; flex-direction: column; align-items: flex-end; margin-left: auto; padding: 8px 15px 0 0; font: 700 10px/12px "DejaVu Sans Condensed", sans-serif; color: #8298bd; }
.fold i { width: 43px; height: 10px; margin-bottom: 3px; background: #69a2bd; clip-path: polygon(50% 0, 100% 100%, 0 100%); }
main { display: flex; flex-direction: column; height: 781px; padding-top: 17px; background: linear-gradient(#d8d5cf, #d8d7d1 17px, #d6d6d6 17px); color: #686868; flex: none; }
.tabs { display: flex; flex: none; border-top: 1px solid #cacaca; background: linear-gradient(#d5d5d5, #cfcfcf); padding-left: 3px; font-weight: 700; }
.years { height: 27px; border-bottom: 2px solid #dedede; padding-top: 2px; }
.modes { height: 29px; border-bottom: 3px solid #dedede; padding-top: 2px; gap: 5px; }
.tab { border: 1px solid #bdbdbd; border-bottom: 0; border-radius: 4px 4px 0 0; background: linear-gradient(#d9d9d9, #cecece); color: #969696; height: 22px; line-height: 22px; padding-left: 10px; width: 109px; flex: none; }
.tab.on { background: linear-gradient(#e3e3e3, #dedede); color: #6b6b6b; width: 93px; padding-left: 9px; }
.years .tab.on { width: 85px; padding-left: 10px; }
.toolbar { display: flex; height: 31px; padding: 1px 0 0 3px; flex: none; background: #dcdcdc; border-top: 2px solid #cacaca; border-bottom: 1px solid #c4c4c4; }
.group { display: flex; align-items: center; width: 1361px; height: 27px; border: 1px solid #c9c9c9; border-radius: 3px; }
.tool { display: flex; align-items: center; color: #777; } .off { opacity: .5; }
.tool i { width: 7px; height: 4px; margin-left: 4px; background: #707070; clip-path: polygon(0 0, 100% 0, 50% 100%); }
.group .lk { margin-left: auto; margin-right: 6px; color: #b5b5b5; }
.body { display: flex; height: 650px; flex: none; }
aside { display: flex; flex-direction: column; align-items: center; width: 25px; padding: 5px 0 0 0; background: linear-gradient(90deg, #d4d4d4, #dedede); border-left: 2px solid #d0d0d0; }
.expand { display: flex; align-items: center; justify-content: center; width: 16px; height: 16px; border: 1px solid #bcbcbc; border-radius: 3px; background: #e2e2e2; }
aside span { writing-mode: vertical-rl; margin: 4px 2px 0 0; font-weight: 700; font-size: 12px; color: #858585; }
.grid { display: flex; flex-direction: column; width: 1895px; background: #e5e5e5; border-left: 1px solid #c6c6c6; }
.row { display: grid; grid-template-columns: 84px 42px 126px 126px 189px 109px 563px 105px 105px 263px 84px 84px 14px; flex: none; }
.cell { border-right: 1px solid #c4c4c4; overflow: hidden; }
.head { height: 79px; background: linear-gradient(#dfdfde, #dadcdb 22px, #d5d6d8 24px, #d6d7d9); color: #5f6265; }
.head .cell { display: flex; flex-direction: column; align-items: center; padding-top: 4px; border-bottom: 1px solid #b9bcc8; line-height: 16px; position: relative; }
.head .short { border-bottom: 0; }
.filters { height: 23px; }
.filters .cell { display: flex; justify-content: flex-end; background: linear-gradient(#dcdedd, #e5e5e5 8px); }
.filters .short { background: #d6d7d9; }
.drop { display: flex; align-items: center; justify-content: center; width: 17px; height: 22px; background: linear-gradient(#e0e0e0, #c9c9c9); border-left: 1px solid #b9bcc8; border-bottom: 1px solid #b5b8c2; }
.head .drop { position: absolute; right: 0; bottom: -20px; border-top: 1px solid #b9bcc8; z-index: 2; }
.head .short { overflow: visible; }
.data { height: 22px; background: #d5d5d5; border-top: 1px dotted #b5b5b5; border-bottom: 1px dotted #b5b5b5; color: #5e5e5e; }
.data .cell { display: flex; align-items: center; justify-content: center; }
.data .start { justify-content: flex-start; padding-left: 7px; }
.check { width: 13px; height: 13px; border: 1px solid #a1a1a1; background: linear-gradient(135deg, #c9ccd0, #eee); box-shadow: inset 0 0 0 1px #e5e5e5; }
.blank { height: 510px; flex: none; }
.hscroll { display: flex; align-items: center; height: 16px; background: #dedede; padding-left: 17px; flex: none; }
.thumb { width: 863px; height: 16px; margin-left: 9px; background: #cbcbcb; } .rt { margin-left: auto; margin-right: 16px; }
.pager { display: flex; align-items: center; height: 27px; padding-top: 1px; border-top: 1px solid #c6c6c6; background: linear-gradient(#d6d6d6, #dcdcdc); padding-left: 9px; color: #686868; flex: none; }
.sep { width: 1px; height: 14px; margin-left: 11px; background: #bababa; }
.pg { margin-left: 8px; } .of { margin-left: 8px; }
.inp { width: 32px; height: 21px; margin-left: 11px; padding: 2px 0 0 4px; border: 1px solid #b6b9c3; background: #e4e4e4; }
.s2 { margin: 0 11px 0 9px; } .s3.sep { margin: 0 6px 0 10px; } .s4 { margin-left: 9px; } .rec { margin-left: 8px; }
.combo { display: flex; align-items: center; justify-content: space-between; width: 74px; height: 21px; margin-left: 6px; padding-left: 4px; border: 1px solid #b6b9c3; background: #e4e4e4; }
.combo .drop { height: 19px; border-bottom: 0; }
.total { margin-left: auto; margin-right: 5px; }
.taskbar { position: relative; display: flex; height: 40px; border-top: 1px solid #17364f; flex: none; overflow: hidden; }
.taskbar::before { content: ""; position: absolute; left: 0; right: 0; top: 0; height: 1px; background: #a2cbe3; z-index: 1; }
.taskbar > * { position: relative; } .taskbar > .wall { position: absolute; }
.orb { margin: 0 0 0 8px; }
.task { display: flex; align-items: center; justify-content: center; width: 59px; height: 39px; border: 1px solid #1e4a6c; border-radius: 3px; box-shadow: inset 0 0 0 1px rgba(255, 255, 255, .65); background: linear-gradient(135deg, rgba(255, 255, 255, .5), rgba(255, 255, 255, .12)); }
.exp { margin-left: 13px; } .ff { margin: 3px 0 0 17px; } .wmp { margin: 7px 0 0 31px; } .chr { margin-left: 19px; }
.ie { margin-left: 3px; background: linear-gradient(135deg, rgba(255, 255, 255, .9), rgba(255, 255, 255, .5)); }
.tray { display: flex; align-items: flex-start; margin-left: auto; color: #fff; }
.ru { margin: 9px 0 0; } .lang { margin: 8px 0 0 9px; } .up { margin: 18px 0 0 10px; } .flagt { margin: 12px 0 0 12px; } .net { margin: 12px 0 0 8px; } .snd { margin: 13px 0 0 7px; }
.clock { display: flex; flex-direction: column; align-items: center; margin: 4px 12px 0 16px; line-height: 17px; }
.peek { width: 14px; height: 39px; border: 1px solid #6f90b3; background: linear-gradient(150deg, #7793b2, #1d4470 60%); }
.modal { position: absolute; left: 646px; top: 312px; width: 630px; height: 524px; display: flex; flex-direction: column; align-items: center; background: #e8e8e8; border: 1px solid #a2a2a2; border-top: 2px solid #999; border-radius: 5px; box-shadow: 1px 1px 4px rgba(0, 0, 0, .4); z-index: 3; }
.mhead { display: flex; align-items: center; justify-content: space-between; width: 100%; height: 21px; padding: 0 3px 0 6px; color: #333; flex: none; }
.mhead i { display: flex; align-items: center; justify-content: center; width: 16px; height: 16px; border: 1px solid #a6a6a6; border-radius: 3px; background: #f4f4f4; box-shadow: inset 0 0 0 1px #fff; }
.mtext { width: 600px; height: 461px; margin: 6px 0 0 1px; padding-top: 10px; overflow: hidden; line-height: 15.220px; flex: none; }
.mtext div { height: 15.220px; }
button { width: 79px; height: 25px; margin: 5px 0 0 0; padding: 1px 0 0 2px; border: 1px solid #999; border-bottom: 0; border-radius: 3px 3px 0 0; background: linear-gradient(#f8f8f8, #e9e9e9); font: inherit; color: #333; flex: none; }
</style>
